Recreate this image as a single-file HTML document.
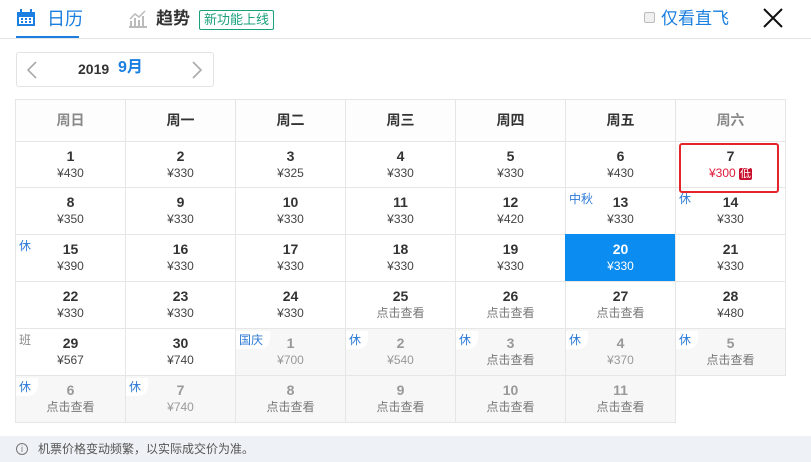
<!DOCTYPE html>
<html><head><meta charset="utf-8"><style>
*{margin:0;padding:0;box-sizing:border-box}
body{width:811px;height:462px;position:relative;background:#fff;font-family:"Liberation Sans","Noto Sans CJK SC",sans-serif;overflow:hidden;color:#333}
.a{position:absolute}
.c{position:absolute;width:111px;border:1px solid #e6e6e6;text-align:center;background:#fff}
.c b{display:block;font-size:14px;margin-top:6px;line-height:17px;color:#333}
.c span{display:block;font-size:12px;line-height:16px;color:#444}
.g{background:#f7f7f7}
.g b{color:#999}.g span{color:#999}
.t{position:absolute;left:0;top:2px;font-size:12px;color:#2d7ad6;background:#fff;padding:0 7px 0 3px;line-height:18px;border-radius:0 0 10px 0}
.h{position:absolute;top:99px;width:111px;height:43px;border:1px solid #e6e6e6;text-align:center;line-height:40px;font-size:14px;font-weight:bold;color:#333;background:#fdfdfd}
</style></head><body>
<svg class="a" style="left:16px;top:9px" width="20" height="18" viewBox="0 0 20 18"><rect x="1" y="3" width="18" height="14" fill="#1a7fe0"/><rect x="3" y="8" width="14" height="7" fill="#fff"/><rect x="4" y="0" width="2" height="5" fill="#1a7fe0"/><rect x="14" y="0" width="2" height="5" fill="#1a7fe0"/><g fill="#1a7fe0"><rect x="5" y="9" width="2" height="2"/><rect x="9" y="9" width="2" height="2"/><rect x="13" y="9" width="2" height="2"/><rect x="5" y="12" width="2" height="2"/><rect x="9" y="12" width="2" height="2"/><rect x="13" y="12" width="2" height="2"/></g></svg>
<div class="a" style="left:47px;top:7px;font-size:18px;color:#1a7fe0;line-height:24px">日历</div>
<div class="a" style="left:16px;top:36px;width:63px;height:3px;background:#1a7fe0"></div>
<svg class="a" style="left:128px;top:9px" width="20" height="20" viewBox="0 0 20 20"><g fill="#bbb"><rect x="1" y="17" width="18" height="2"/><rect x="2" y="12" width="2" height="5"/><rect x="6" y="9" width="2" height="8"/><rect x="10" y="11" width="2" height="6"/><rect x="14" y="7" width="2" height="10"/></g><path d="M2 10 L7 5 L11 8 L17 2" stroke="#bbb" stroke-width="1.5" fill="none"/></svg>
<div class="a" style="left:156px;top:8px;font-size:17px;font-weight:bold;color:#333;line-height:22px">趋势</div>
<div class="a" style="left:199px;top:10px;width:75px;height:20px;border:1px solid #1aa07a;border-radius:2px;font-size:13px;color:#1aa07a;text-align:center;line-height:18px">新功能上线</div>
<div class="a" style="left:644px;top:12px;width:11px;height:11px;border:1px solid #bbb;border-radius:2px;background:#f0f0f0"></div>
<div class="a" style="left:661px;top:7px;font-size:17px;color:#1a7fe0;line-height:24px">仅看直飞</div>
<svg class="a" style="left:762px;top:7px" width="22" height="22" viewBox="0 0 22 22"><path d="M2 2L20 20M20 2L2 20" stroke="#111" stroke-width="2"/></svg>
<div class="a" style="left:0;top:38px;width:811px;height:1px;background:#e5e5e5"></div>
<div class="a" style="left:16px;top:52px;width:198px;height:35px;border:1px solid #e3e3e3;border-radius:3px"></div>
<svg class="a" style="left:26px;top:61px" width="12" height="18"><path d="M10 1L2 9L10 17" stroke="#aaa" stroke-width="1.6" fill="none"/></svg>
<svg class="a" style="left:191px;top:61px" width="12" height="18"><path d="M2 1L10 9L2 17" stroke="#aaa" stroke-width="1.6" fill="none"/></svg>
<div class="a" style="left:78px;top:60px;font-size:14px;font-weight:bold;color:#333;line-height:18px">2019</div>
<div class="a" style="left:118px;top:58px;font-size:16px;font-weight:bold;color:#1a7fe0;line-height:20px">9月</div>
<div class="h" style="left:15px;color:#888">周日</div>
<div class="h" style="left:125px">周一</div>
<div class="h" style="left:235px">周二</div>
<div class="h" style="left:345px">周三</div>
<div class="h" style="left:455px">周四</div>
<div class="h" style="left:565px">周五</div>
<div class="h" style="left:675px;color:#888">周六</div>
<div class="c" style="left:15px;top:141px;height:47px"><b>1</b><span>¥430</span></div>
<div class="c" style="left:125px;top:141px;height:47px"><b>2</b><span>¥330</span></div>
<div class="c" style="left:235px;top:141px;height:47px"><b>3</b><span>¥325</span></div>
<div class="c" style="left:345px;top:141px;height:47px"><b>4</b><span>¥330</span></div>
<div class="c" style="left:455px;top:141px;height:47px"><b>5</b><span>¥330</span></div>
<div class="c" style="left:565px;top:141px;height:47px"><b>6</b><span>¥430</span></div>
<div class="c" style="left:675px;top:141px;height:47px"><b>7</b><span style="color:#e0193a">¥300 <i style="font-style:normal;background:#c8102e;color:#fff;font-size:11px;padding:0 1px;border-radius:2px">低</i></span></div>
<div class="c" style="left:15px;top:187px;height:48px"><b>8</b><span>¥350</span></div>
<div class="c" style="left:125px;top:187px;height:48px"><b>9</b><span>¥330</span></div>
<div class="c" style="left:235px;top:187px;height:48px"><b>10</b><span>¥330</span></div>
<div class="c" style="left:345px;top:187px;height:48px"><b>11</b><span>¥330</span></div>
<div class="c" style="left:455px;top:187px;height:48px"><b>12</b><span>¥420</span></div>
<div class="c" style="left:565px;top:187px;height:48px"><div class="t">中秋</div><b>13</b><span>¥330</span></div>
<div class="c" style="left:675px;top:187px;height:48px"><div class="t">休</div><b>14</b><span>¥330</span></div>
<div class="c" style="left:15px;top:234px;height:48px"><div class="t">休</div><b>15</b><span>¥390</span></div>
<div class="c" style="left:125px;top:234px;height:48px"><b>16</b><span>¥330</span></div>
<div class="c" style="left:235px;top:234px;height:48px"><b>17</b><span>¥330</span></div>
<div class="c" style="left:345px;top:234px;height:48px"><b>18</b><span>¥330</span></div>
<div class="c" style="left:455px;top:234px;height:48px"><b>19</b><span>¥330</span></div>
<div class="c" style="left:565px;top:234px;height:48px;background:#0a8cf0;border-color:#0a8cf0"><b style="color:#fff">20</b><span style="color:#fff">¥330</span></div>
<div class="c" style="left:675px;top:234px;height:48px"><b>21</b><span>¥330</span></div>
<div class="c" style="left:15px;top:281px;height:48px"><b>22</b><span>¥330</span></div>
<div class="c" style="left:125px;top:281px;height:48px"><b>23</b><span>¥330</span></div>
<div class="c" style="left:235px;top:281px;height:48px"><b>24</b><span>¥330</span></div>
<div class="c" style="left:345px;top:281px;height:48px"><b>25</b><span style="color:#777">点击查看</span></div>
<div class="c" style="left:455px;top:281px;height:48px"><b>26</b><span style="color:#777">点击查看</span></div>
<div class="c" style="left:565px;top:281px;height:48px"><b>27</b><span style="color:#777">点击查看</span></div>
<div class="c" style="left:675px;top:281px;height:48px"><b>28</b><span>¥480</span></div>
<div class="c" style="left:15px;top:328px;height:48px"><div class="t" style="color:#888">班</div><b>29</b><span>¥567</span></div>
<div class="c" style="left:125px;top:328px;height:48px"><b>30</b><span>¥740</span></div>
<div class="c g" style="left:235px;top:328px;height:48px"><div class="t">国庆</div><b>1</b><span>¥700</span></div>
<div class="c g" style="left:345px;top:328px;height:48px"><div class="t">休</div><b>2</b><span>¥540</span></div>
<div class="c g" style="left:455px;top:328px;height:48px"><div class="t">休</div><b>3</b><span style="color:#777">点击查看</span></div>
<div class="c g" style="left:565px;top:328px;height:48px"><div class="t">休</div><b>4</b><span>¥370</span></div>
<div class="c g" style="left:675px;top:328px;height:48px"><div class="t">休</div><b>5</b><span style="color:#777">点击查看</span></div>
<div class="c g" style="left:15px;top:375px;height:48px"><div class="t">休</div><b>6</b><span style="color:#777">点击查看</span></div>
<div class="c g" style="left:125px;top:375px;height:48px"><div class="t">休</div><b>7</b><span>¥740</span></div>
<div class="c g" style="left:235px;top:375px;height:48px"><b>8</b><span style="color:#777">点击查看</span></div>
<div class="c g" style="left:345px;top:375px;height:48px"><b>9</b><span style="color:#777">点击查看</span></div>
<div class="c g" style="left:455px;top:375px;height:48px"><b>10</b><span style="color:#777">点击查看</span></div>
<div class="c g" style="left:565px;top:375px;height:48px"><b>11</b><span style="color:#777">点击查看</span></div>
<div class="a" style="left:679px;top:143px;width:100px;height:50px;border:2px solid #e4262b;border-radius:3px"></div>
<div class="a" style="left:0;top:436px;width:811px;height:26px;background:#eef1f5"></div>
<div class="a" style="left:16px;top:443px;width:12px;height:12px;border:1px solid #777;border-radius:50%;font-size:9px;line-height:10px;text-align:center;color:#777">i</div>
<div class="a" style="left:38px;top:440px;font-size:12px;color:#555;line-height:18px">机票价格变动频繁，以实际成交价为准。</div>
</body></html>
